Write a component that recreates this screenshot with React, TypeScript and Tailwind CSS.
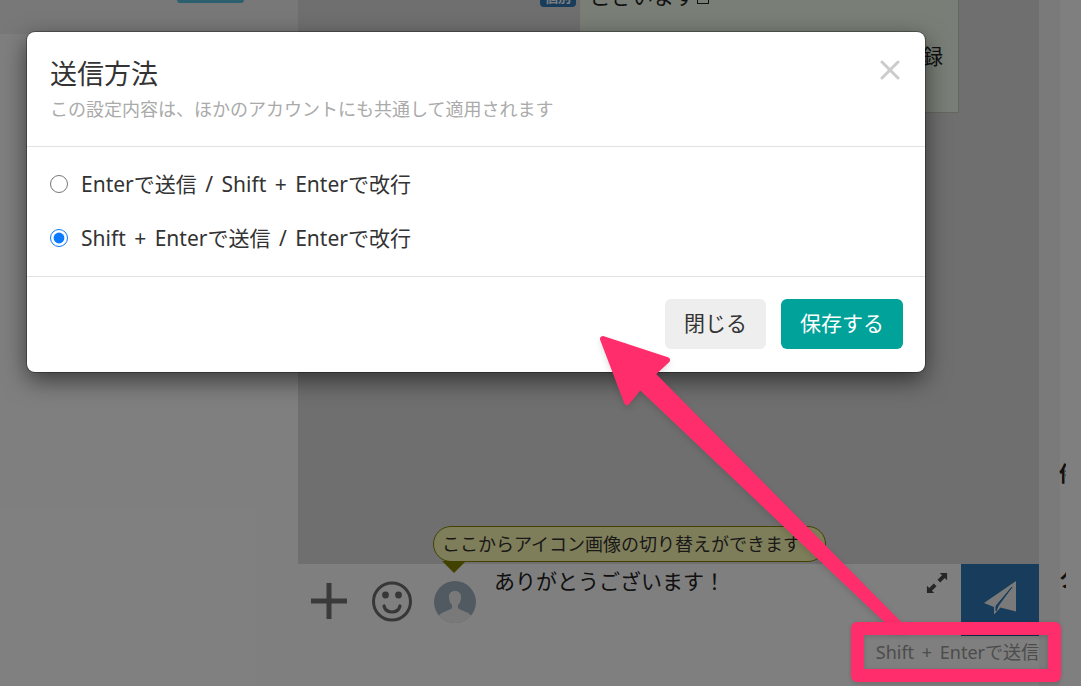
import { useState } from "react";

const OPTIONS = [
  { id: "enter", parts: ["Enterで送信", "/", "Shift", "+", "Enterで改行"] },
  { id: "shift-enter", parts: ["Shift", "+", "Enterで送信", "/", "Enterで改行"] },
];

function KeyText({ parts }: { parts: string[] }) {
  return (
    <span className="whitespace-nowrap">
      {parts.map((part, i) =>
        part === "/" || part === "+" ? (
          <span key={i} className="mx-[3px]">{` ${part} `}</span>
        ) : (
          part
        ),
      )}
    </span>
  );
}

function Messages() {
  return (
    <div className="flex flex-1 items-start bg-[#dfdfdf] pl-[242px]">
      <span className="flex h-[7px] w-9 items-end justify-center overflow-hidden rounded-b bg-[#2f78b8] pb-[2px] text-[13px] leading-4 font-bold text-white">
        個別
      </span>
      <div className="ml-1 flex h-[113px] w-[379px] flex-col justify-end overflow-hidden border-r border-b border-[#c5cfbf] bg-[#f3fdec] pr-[15px] pb-[41px] pl-2.5 text-[21px] leading-[30px] text-[#222]">
        <p className="flex h-[60px] shrink-0 items-start">
          ございます
          <span className="mt-1 ml-0.5 h-[19px] w-3 border border-[#222]" />
        </p>
        <p className="text-right">録</p>
      </div>
    </div>
  );
}

function Avatar() {
  return (
    <svg viewBox="0 0 42 42" className="h-[42px] w-[42px]" aria-hidden="true">
      <clipPath id="face">
        <circle cx="21" cy="21" r="21" />
      </clipPath>
      <g clipPath="url(#face)">
        <rect width="42" height="42" fill="#a3b5c2" />
        <path
          d="M21 10c-4.500 0-6.500 3-6 7 .2 2.500 1 5 3 7v3c-2 3-11 3-14 9v8h34v-8c-3-6-12-6-14-9v-3c2-2 2.800-4.500 3-7 .5-4-1.500-7-6-7z"
          fill="#f2f2f2"
        />
      </g>
    </svg>
  );
}

function Composer() {
  return (
    <div className="flex h-[122px] bg-white">
      <div className="flex h-[74px] items-center pl-[13px]">
        <button type="button" aria-label="追加" className="h-9 w-9">
          <svg viewBox="0 0 36 36" stroke="#747474" strokeWidth="5">
            <path d="M18 0v36M0 18h36" />
          </svg>
        </button>
        <button type="button" aria-label="絵文字" className="ml-[23px] h-11 w-11">
          <svg viewBox="0 0 44 44" fill="none" stroke="#6e6e6e">
            <circle cx="22" cy="22.500" r="18.500" strokeWidth="3" />
            <circle cx="15.500" cy="16" r="3.400" fill="#6e6e6e" stroke="none" />
            <circle cx="28.500" cy="16" r="3.400" fill="#6e6e6e" stroke="none" />
            <path d="M14 27c2 8 14 8 16 0" strokeWidth="3.200" strokeLinecap="round" />
          </svg>
        </button>
        <button type="button" aria-label="アイコン画像" className="relative mt-0.5 ml-5 h-[42px] w-[42px]">
          <Avatar />
          <span className="absolute bottom-[61px] -left-px flex h-9 w-[393px] items-center rounded-full border border-[#848400] bg-[#fffcb4] pl-2 text-[18px] whitespace-nowrap text-[#333]">
            ここからアイコン画像の切り替えができます
          </span>
          <svg viewBox="0 0 24 12" className="absolute bottom-[50px] left-2 h-3 w-6" fill="#848400">
            <path d="M0 0h24L12 12z" />
          </svg>
        </button>
      </div>
      <textarea
        aria-label="メッセージ"
        defaultValue="ありがとうございます！"
        className="ml-[18px] block h-[58px] min-w-0 flex-1 resize-none pt-px text-[21px] leading-8 text-[#222] outline-none"
      />
      <div className="w-[35px]">
        <button type="button" aria-label="拡大" className="mt-2 h-[22px] w-[22px]">
          <svg viewBox="0 0 24 24" fill="#4c4c4c">
            <path d="M15 1h8v8l-2.500-2.500-5 5-3-3 5-5zM1 23v-8l2.500 2.500 5-5 3 3-5 5L9 23z" />
          </svg>
        </button>
      </div>
      <div className="flex w-[78px] flex-col items-end">
        <button
          type="button"
          aria-label="送信"
          className="flex h-[72px] w-full items-center justify-center border-b border-[#28608f] bg-[#2f78b8]"
        >
          <svg viewBox="0 0 34 34" className="mb-1 h-[34px] w-[34px]">
            <path d="M33 0L1 22l10 4v7.500l6.500-7L33 30.500z" fill="#f5f5f5" />
            <path d="M29 6L13 25v5l2-5z" fill="#2f78b8" stroke="#2f78b8" />
          </svg>
        </button>
        <span className="text-[18px] leading-8 text-[#999]">
          <KeyText parts={["Shift", "+", "Enterで送信"]} />
        </span>
      </div>
    </div>
  );
}

function SendMethodDialog() {
  const [method, setMethod] = useState("shift-enter");
  return (
    <div className="absolute inset-0 bg-black/50 pt-8 pr-[156px] pl-[27px]">
      <form
        role="dialog"
        aria-labelledby="dialog-title"
        onSubmit={(e) => e.preventDefault()}
        className="rounded-lg bg-white text-[#333] shadow-[0_0_0_1px_rgba(0,0,0,0.3),0_8px_24px_rgba(0,0,0,0.55)]"
      >
        <header className="flex h-[115px] items-start justify-between border-b border-[#e2e2e2] pt-[22px] pr-[25px] pl-[23px]">
          <div>
            <h1 id="dialog-title" className="text-[27px] leading-10">
              送信方法
            </h1>
            <p className="text-[18px] leading-[30px] text-[#aaa]">
              この設定内容は、ほかのアカウントにも共通して適用されます
            </p>
          </div>
          <button type="button" aria-label="閉じる" className="mt-1.5 h-5 w-5">
            <svg viewBox="0 0 20 20" stroke="#ccc" strokeWidth="3" strokeLinecap="round">
              <path d="M2 2l16 16M18 2L2 18" />
            </svg>
          </button>
        </header>
        <div className="flex h-[130px] flex-col gap-6 border-b border-[#e2e2e2] pt-[22px] pl-[23px]">
          {OPTIONS.map((o) => (
            <label key={o.id} className="flex h-[30px] items-center gap-[13px] text-[21px] leading-[30px]">
              <input
                type="radio"
                name="method"
                value={o.id}
                checked={method === o.id}
                onChange={() => setMethod(o.id)}
                className="h-[18px] w-[18px] accent-[#0a7aff]"
              />
              <KeyText parts={o.parts} />
            </label>
          ))}
        </div>
        <footer className="flex h-[95px] justify-end gap-[15px] pt-[22px] pr-[22px] text-[21px]">
          <button type="button" className="h-[50px] w-[101px] rounded-md bg-[#eee]">
            閉じる
          </button>
          <button type="submit" className="h-[50px] w-[122px] rounded-md bg-[#00a299] text-white">
            保存する
          </button>
        </footer>
      </form>
    </div>
  );
}

function Annotation() {
  return (
    <>
      <svg
        viewBox="0 0 320 300"
        className="pointer-events-none absolute top-[330px] left-[595px] h-[300px] w-[320px] drop-shadow-md"
        fill="#ff2d6b"
        stroke="#ff2d6b"
        strokeWidth="6"
        strokeLinejoin="round"
        aria-hidden="true"
      >
        <path d="M8 9L72 30L57 44L308 298L300 298L45 56L32 72z" />
      </svg>
      <div className="pointer-events-none absolute right-5 bottom-1 h-[60px] w-[210px] rounded-md border-[13px] border-[#ff2d6b] drop-shadow-sm" />
    </>
  );
}

export default function App() {
  return (
    <div className="relative flex h-screen overflow-hidden bg-white font-['Noto_Sans','Noto_Sans_CJK_JP',sans-serif]">
      <aside className="w-[298px]">
        <div className="flex h-[34px] items-start justify-end bg-[#f0f0f0] pr-[54px]">
          <div className="h-[3px] w-[67px] rounded-b bg-[#5bc0de]" />
        </div>
      </aside>
      <main className="flex min-w-0 flex-1 flex-col">
        <Messages />
        <Composer />
      </main>
      <aside className="flex w-[42px] flex-col bg-linear-to-r from-[#f5f5f5] from-50% to-white to-50% pt-[457px] pl-5 text-[21px] leading-8 font-bold text-[#222]">
        <span className="w-[7px] overflow-hidden whitespace-nowrap">件</span>
        <span className="mt-[73px] w-[7px] overflow-hidden whitespace-nowrap">タ</span>
      </aside>
      <SendMethodDialog />
      <Annotation />
    </div>
  );
}
